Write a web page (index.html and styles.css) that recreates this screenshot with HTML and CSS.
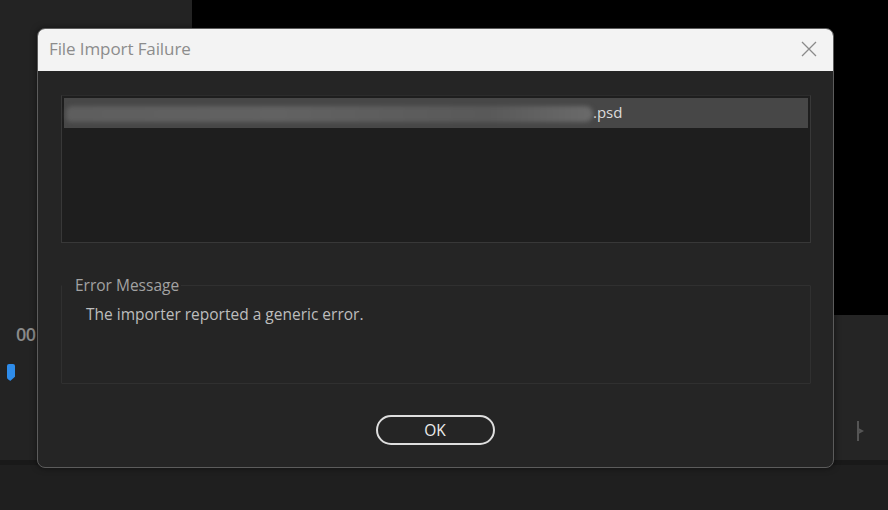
FILE: index.html
```html
<!DOCTYPE html>
<html>
<head>
<meta charset="utf-8">
<link rel="stylesheet" href="styles.css">
</head>
<body>
<div class="app">
  <div class="left-panel">
    <div class="timecode">00</div>
    <div class="playhead"></div>
  </div>
  <div class="viewer"></div>
  <div class="timeline">
    <svg class="tl-icon" width="8" height="22" viewBox="0 0 8 22"><path d="M2 1 V21 M2 9 L6 11 L2 13" stroke="#555" stroke-width="2" fill="none"/></svg>
  </div>
  <div class="footer"></div>
</div>

<div class="dialog">
  <div class="titlebar">
    <span class="title">File Import Failure</span>
    <svg class="close" width="16" height="16" viewBox="0 0 16 16"><path d="M1 1 L15 15 M15 1 L1 15" stroke="#8a8a8a" stroke-width="1.3" fill="none"/></svg>
  </div>
  <div class="body">
    <div class="list">
      <div class="row selected">
        <span class="blurred" aria-hidden="true"></span>
        <span class="ext">.psd</span>
      </div>
    </div>
    <fieldset class="msg">
      <legend>Error Message</legend>
      <p>The importer reported a generic error.</p>
    </fieldset>
    <div class="actions">
      <button class="ok">OK</button>
    </div>
  </div>
</div>
</body>
</html>
```
FILE: styles.css
```css
* { box-sizing: border-box; }
html, body { margin: 0; padding: 0; }
body {
  width: 888px;
  height: 510px;
  overflow: hidden;
  background: #1f1f1f;
  font-family: "Open Sans", "Noto Sans", sans-serif;
  position: relative;
}
.app {
  display: grid;
  grid-template-columns: 192px 1fr;
  grid-template-rows: 315px 145px 5px 1fr;
  height: 510px;
}
.left-panel {
  grid-column: 1;
  grid-row: 1 / 3;
  background: #232323;
  position: relative;
}
.timecode {
  position: absolute;
  left: 16px;
  top: 322px;
  font-size: 18px;
  color: #8a8a8a;
  font-weight: 600;
  letter-spacing: -0.5px;
}
.playhead {
  position: absolute;
  left: 7px;
  top: 364px;
  width: 8px;
  height: 17px;
  background: #2e8cea;
  border-radius: 2px 2px 1px 4px;
  clip-path: polygon(0 0, 100% 0, 100% 75%, 40% 100%, 0 85%);
}
.viewer {
  grid-column: 2;
  grid-row: 1;
  background: #000;
}
.timeline {
  grid-column: 2;
  grid-row: 2;
  background: #252525;
  position: relative;
}
.tl-icon {
  position: absolute;
  left: 664px;
  top: 105px;
}
.footer {
  grid-column: 1 / 3;
  grid-row: 3;
  background: #191919;
}

.dialog {
  position: absolute;
  left: 37px;
  top: 28px;
  width: 797px;
  height: 440px;
  border: 1px solid #5c5c5c;
  border-radius: 8px;
  background: #252525;
  overflow: hidden;
  display: flex;
  flex-direction: column;
  box-shadow: 0 0 6px rgba(0,0,0,0.5);
}
.titlebar {
  height: 42px;
  flex: none;
  background: #f3f3f3;
  display: flex;
  align-items: center;
  justify-content: space-between;
  padding: 0 16px 4px 11px;
}
.title {
  font-family: "Open Sans", "Noto Sans", sans-serif;
  font-size: 17px;
  color: #8c8c8c;
  letter-spacing: -0.1px;
}
.close { display: block; margin-top: 2px; }
.body {
  flex: 1;
  padding: 24px 22px 0 23px;
  display: flex;
  flex-direction: column;
}
.list {
  height: 148px;
  border: 1px solid #383838;
  border-top-color: #2c2c2c;
  background: #1e1e1e;
  padding: 2px;
}
.row {
  height: 30px;
  display: flex;
  align-items: center;
}
.row.selected { background: #474747; }
.blurred {
  display: block;
  width: 527px;
  height: 16px;
  margin-left: 2px;
  margin-top: 2px;
  background: linear-gradient(90deg, #5e5e5e, #626262 40%, #595959 80%, #6a6a6a);
  border-radius: 8px 10px 10px 6px;
  filter: blur(2px);
}
.ext {
  font-size: 15px;
  color: #dcdcdc;
  margin-left: 0;
  margin-top: -2px;
}
.msg {
  margin: 33px 0 0 0;
  padding: 11px 0 0 24px;
  height: 108px;
  border: 1px solid #303030;
  border-radius: 1px;
}
.msg legend {
  padding: 0 2px 0 13px;
  margin-left: -24px;
  font-size: 15.5px;
  color: #a2a2a2;
  line-height: 18px;
}
.msg p {
  margin: 0;
  font-size: 15.5px;
  color: #bdbdbd;
  line-height: 18px;
}
.actions {
  display: flex;
  justify-content: center;
  margin-top: 31px;
}
.ok {
  width: 119px;
  height: 30px;
  border: 2px solid #dedede;
  border-radius: 15px;
  background: transparent;
  color: #ececec;
  font-family: "Open Sans", "Noto Sans", sans-serif;
  font-size: 15.5px;
  padding: 0;
  margin-left: -2px;
}
```
